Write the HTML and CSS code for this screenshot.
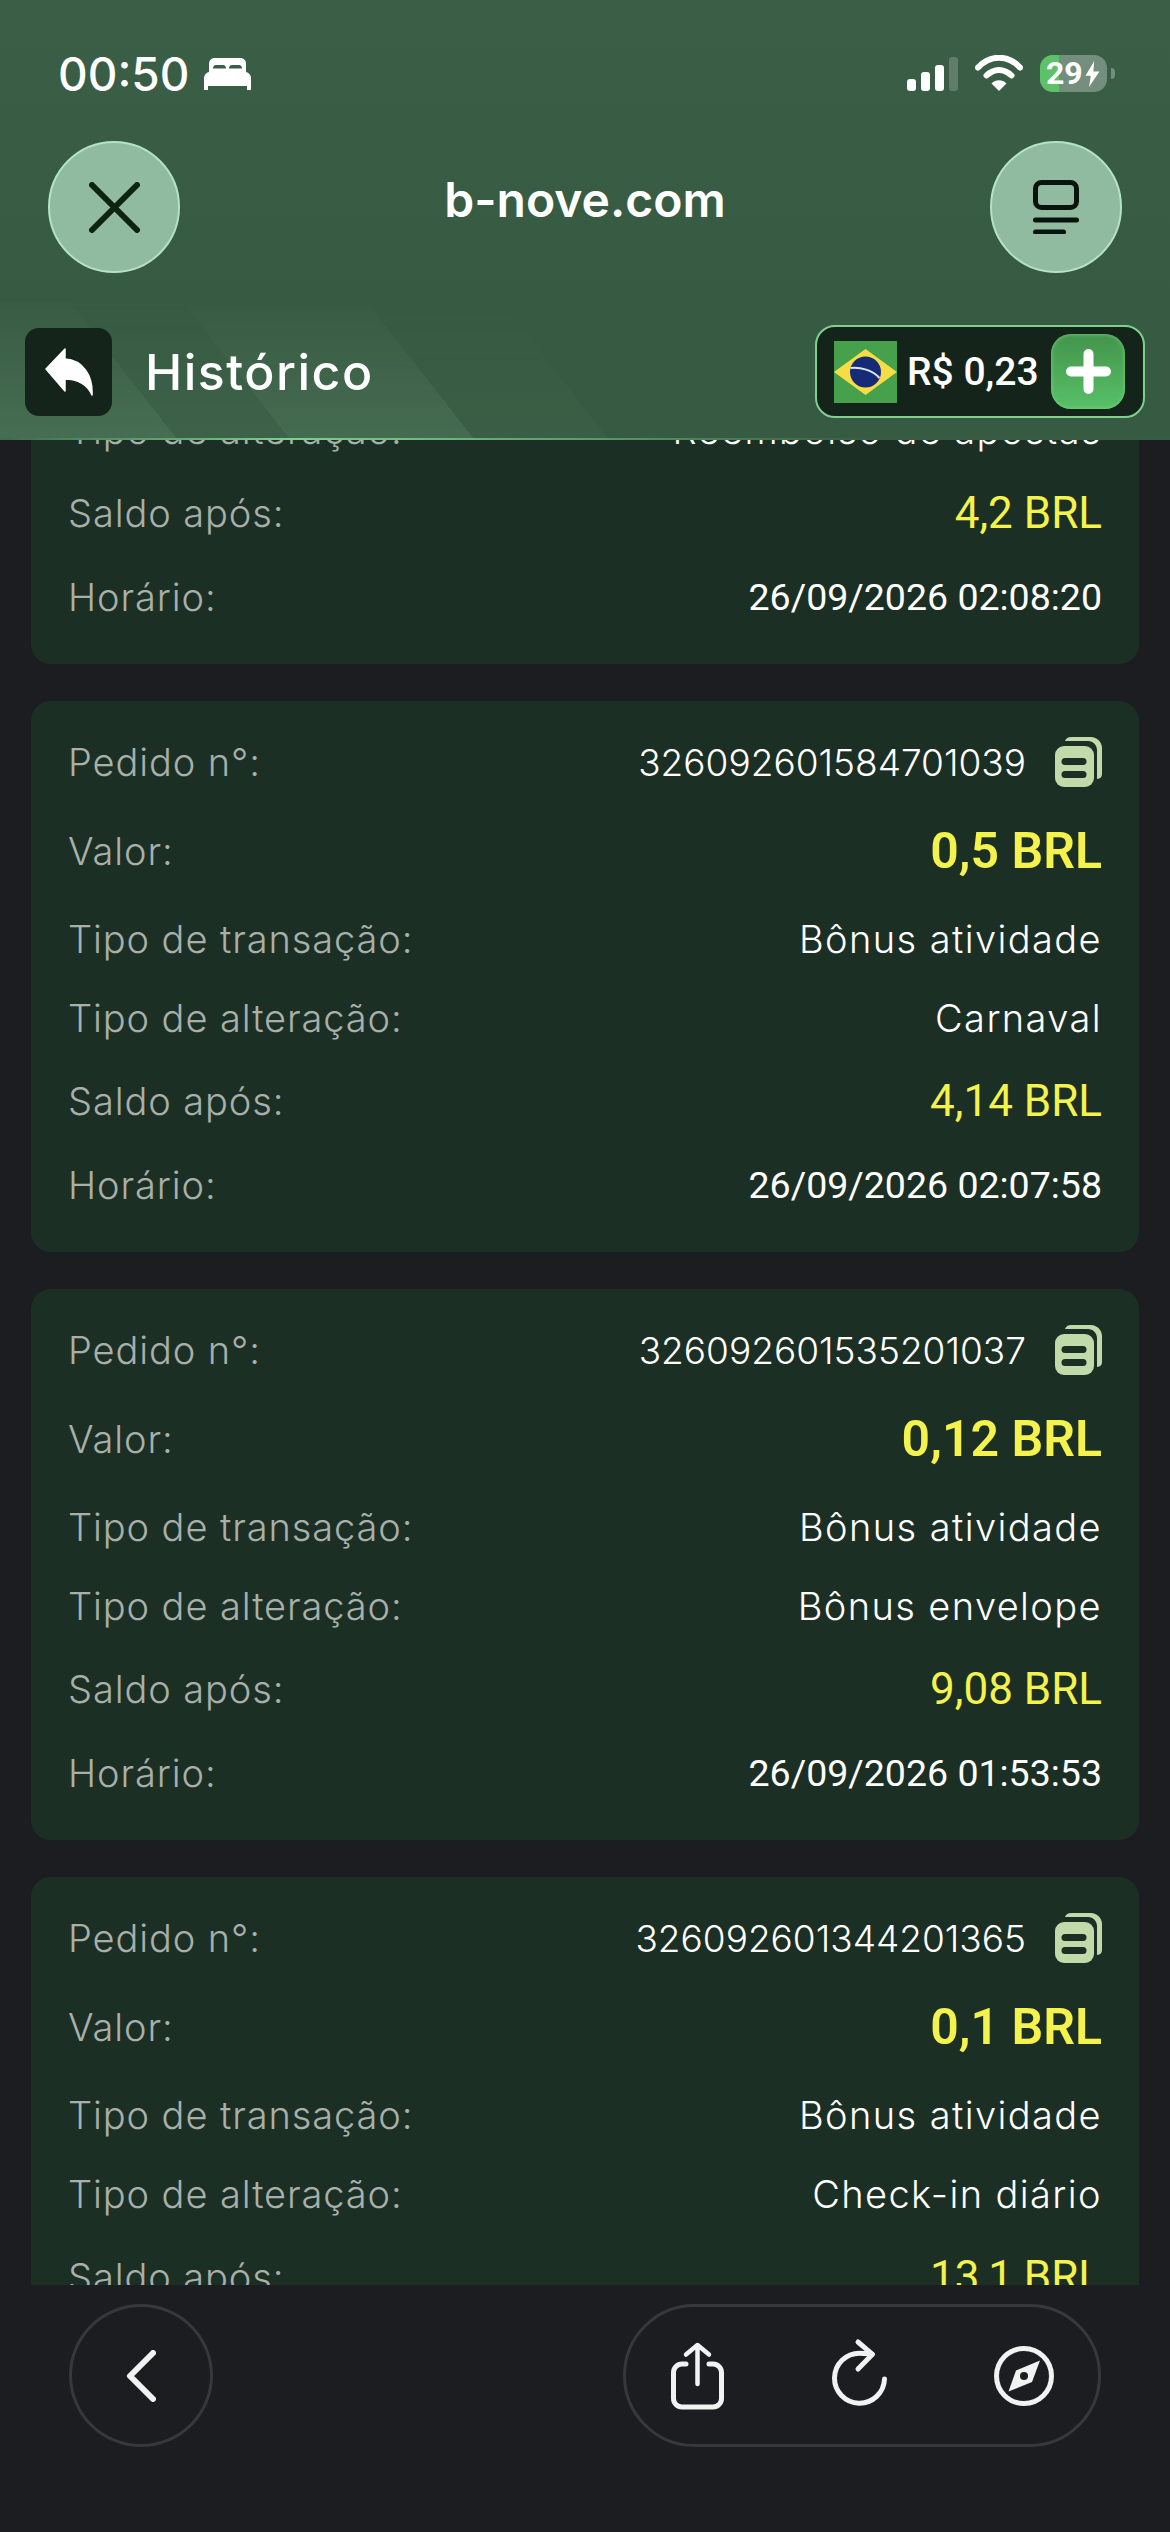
FILE: index.html
```html
<!DOCTYPE html>
<html lang="pt-BR">
<head>
    <meta charset="UTF-8">
    <meta name="viewport" content="width=device-width, initial-scale=1.0">
    <title>b-nove.com</title>
    <link rel="stylesheet" href="styles.css">
</head>
<body>
<div class="app">
    <header class="top">
        <div class="status">
            <div class="status-left">
                <span class="time">00:50</span>
                <svg class="bed" viewBox="0 0 47 32"><path fill="#fff" fill-rule="evenodd" d="M5 14V6c0-3.500 2-6 6-6h25c4 0 6 2.500 6 6v8c3 .8 5 3 5 6v12h-4v-4H4v4H0V20c0-3 2-5.200 5-6zM9 10.500c0-2 1-3.500 3-3.500h7c2 0 3 1.500 3 3.500zM25 10.500c0-2 1-3.500 3-3.500h7c2 0 3 1.500 3 3.500z"/></svg>
            </div>
            <div class="status-right">
                <div class="signal">
                    <i class="bar bar1"></i><i class="bar bar2"></i><i class="bar bar3"></i><i class="bar bar4"></i>
                </div>
                <svg class="wifi" viewBox="0 0 48 36"><path fill="none" stroke="#fff" stroke-width="6" stroke-linecap="round" d="M3 12.500C15-.5 33-.5 45 12.500M11.500 20.500C19 13 29 13 36.500 20.500"/><path fill="#fff" d="M24 36l-7.500-7.500c4-4.200 11-4.200 15 0z"/></svg>
                <div class="battery">
                    <span class="battery-fill"></span>
                    <span class="battery-num">29</span>
                    <svg class="bolt" viewBox="0 0 16 30"><path fill="#fff" d="M10 0L0 17h6L4 30l12-18H9z"/></svg>
                </div>
                <span class="battery-nub"></span>
            </div>
        </div>
        <div class="nav">
            <button class="round-btn">
                <svg width="51" height="51" viewBox="0 0 51 51"><path fill="none" stroke="#0c2410" stroke-width="6" stroke-linecap="round" d="M3 3l45 45M48 3L3 48"/></svg>
            </button>
            <div class="site">b-nove.com</div>
            <button class="round-btn">
                <svg width="46" height="54" viewBox="0 0 46 54"><g fill="none" stroke="#08140c" stroke-width="5" stroke-linecap="round"><rect x="2.500" y="2.500" width="41" height="25" rx="6"/><path d="M2.500 40h41M2.500 52h28"/></g></svg>
            </button>
        </div>
        <div class="subbar">
            <div class="sub-left">
                <button class="back-btn">
                    <svg width="48" height="48" viewBox="0 0 48 48"><path fill="#fff" stroke="#fff" stroke-width="1.500" stroke-linejoin="round" d="M20 1L1 21l19 22V31c12 0 22 5 27 16 1-19-9-35-27-36z"/></svg>
                </button>
                <h1 class="page-title">Histórico</h1>
            </div>
            <div class="wallet">
                <svg class="flag" viewBox="0 0 63 62"><rect width="63" height="62" fill="#47a04c"/><path fill="#f6dc45" d="M31.500 8L63 31 31.500 54 0 31z"/><circle cx="31.500" cy="31" r="15.500" fill="#172a78"/><path fill="none" stroke="#dfe6ea" stroke-width="2" d="M16.500 27c10-1 22 2 29 10"/></svg>
                <span class="wallet-amount">R$ 0,23</span>
                <button class="plus-btn">
                    <svg width="45" height="45" viewBox="0 0 45 45"><path fill="none" stroke="#fff" stroke-width="10" stroke-linecap="round" d="M22.500 5v35M5 22.500h35"/></svg>
                </button>
            </div>
        </div>
    </header>

    <main class="list">
        <div class="track">
            <section class="card card-cut">
                <div class="row row-type"><span class="label">Tipo de alteração:</span><span class="val">Reembolso de apostas</span></div>
                <div class="row row-balance"><span class="label">Saldo após:</span><span class="val balance">4,2 BRL</span></div>
                <div class="row row-time"><span class="label">Horário:</span><span class="val stamp">26/09/2026 02:08:20</span></div>
            </section>

            <section class="card">
                <div class="row"><span class="label">Pedido n°:</span><span class="val order">326092601584701039<svg class="copy" viewBox="0 0 47 50"><path fill="#c2d9aa" d="M10 4c1-2.500 3-4 6-4h20c6 0 11 5 11 11v26c0 3-1.500 4.500-5 5V13c0-5-4-9-9-9z"/><rect y="9" width="39" height="41" rx="9" fill="#c2d9aa"/><rect x="6.500" y="21" width="25" height="7" rx="3.500" fill="#1c2f25"/><rect x="6.500" y="34" width="25" height="7" rx="3.500" fill="#1c2f25"/></svg></span></div>
                <div class="row row-amount"><span class="label">Valor:</span><span class="val amount">0,5 BRL</span></div>
                <div class="row row-kind"><span class="label">Tipo de transação:</span><span class="val">Bônus atividade</span></div>
                <div class="row row-type"><span class="label">Tipo de alteração:</span><span class="val">Carnaval</span></div>
                <div class="row row-balance"><span class="label">Saldo após:</span><span class="val balance">4,14 BRL</span></div>
                <div class="row row-time"><span class="label">Horário:</span><span class="val stamp">26/09/2026 02:07:58</span></div>
            </section>

            <section class="card">
                <div class="row"><span class="label">Pedido n°:</span><span class="val order">326092601535201037<svg class="copy" viewBox="0 0 47 50"><path fill="#c2d9aa" d="M10 4c1-2.500 3-4 6-4h20c6 0 11 5 11 11v26c0 3-1.500 4.500-5 5V13c0-5-4-9-9-9z"/><rect y="9" width="39" height="41" rx="9" fill="#c2d9aa"/><rect x="6.500" y="21" width="25" height="7" rx="3.500" fill="#1c2f25"/><rect x="6.500" y="34" width="25" height="7" rx="3.500" fill="#1c2f25"/></svg></span></div>
                <div class="row row-amount"><span class="label">Valor:</span><span class="val amount">0,12 BRL</span></div>
                <div class="row row-kind"><span class="label">Tipo de transação:</span><span class="val">Bônus atividade</span></div>
                <div class="row row-type"><span class="label">Tipo de alteração:</span><span class="val">Bônus envelope</span></div>
                <div class="row row-balance"><span class="label">Saldo após:</span><span class="val balance">9,08 BRL</span></div>
                <div class="row row-time"><span class="label">Horário:</span><span class="val stamp">26/09/2026 01:53:53</span></div>
            </section>

            <section class="card">
                <div class="row"><span class="label">Pedido n°:</span><span class="val order">326092601344201365<svg class="copy" viewBox="0 0 47 50"><path fill="#c2d9aa" d="M10 4c1-2.500 3-4 6-4h20c6 0 11 5 11 11v26c0 3-1.500 4.500-5 5V13c0-5-4-9-9-9z"/><rect y="9" width="39" height="41" rx="9" fill="#c2d9aa"/><rect x="6.500" y="21" width="25" height="7" rx="3.500" fill="#1c2f25"/><rect x="6.500" y="34" width="25" height="7" rx="3.500" fill="#1c2f25"/></svg></span></div>
                <div class="row row-amount"><span class="label">Valor:</span><span class="val amount">0,1 BRL</span></div>
                <div class="row row-kind"><span class="label">Tipo de transação:</span><span class="val">Bônus atividade</span></div>
                <div class="row row-type"><span class="label">Tipo de alteração:</span><span class="val">Check-in diário</span></div>
                <div class="row row-balance"><span class="label">Saldo após:</span><span class="val balance">13,1 BRL</span></div>
            </section>
        </div>
    </main>

    <footer class="browser-bar">
        <button class="bar-back">
            <svg width="30" height="52" viewBox="0 0 30 52"><path fill="none" stroke="#f2f2f3" stroke-width="6" stroke-linecap="round" stroke-linejoin="round" d="M27 3L4 26l23 23"/></svg>
        </button>
        <div class="bar-pill">
            <svg class="share" viewBox="0 0 53 68"><g fill="none" stroke="#f2f2f3" stroke-linecap="round" stroke-linejoin="round"><path stroke-width="5" d="M15 22h-4a8.500 8.500 0 0 0-8.500 8.500v26A8.500 8.500 0 0 0 11 65h31a8.500 8.500 0 0 0 8.500-8.500v-26A8.500 8.500 0 0 0 42 22h-4"/><path stroke-width="4.500" d="M26.500 3v39M15 12.500L26.500 3 38 12.500"/></g></svg>
            <svg class="reload" viewBox="0 0 56 70"><g fill="none" stroke="#f2f2f3" stroke-width="5" stroke-linecap="round" stroke-linejoin="round"><path d="M53.500 41A25 25 0 1 1 28.700 15.200L41 16"/><path d="M27 4l14.500 12.300L27 31"/></g></svg>
            <svg class="compass" viewBox="0 0 60 62"><circle cx="30" cy="31" r="27.500" fill="none" stroke="#f2f2f3" stroke-width="5"/><path fill="#f2f2f3" d="M46 15.500L38 37 14.500 46.500l7.500-21z"/><circle cx="30" cy="31" r="4" fill="#1c1d21"/></svg>
        </div>
    </footer>
</div>
</body>
</html>
```

FILE: styles.css
```css
* {
    box-sizing: border-box;
}
html, body {
    margin: 0;
    padding: 0;
}
body {
    font-family: Inter, "Noto Sans", sans-serif;
    background-color: #1c1d21;
    color: #fff;
}
button {
    border: 0;
    padding: 0;
    background: none;
    display: flex;
    align-items: center;
    justify-content: center;
}
.app {
    width: 1170px;
    height: 2532px;
    display: flex;
    flex-direction: column;
    overflow: hidden;
}

/* top */
.top {
    flex: none;
    height: 440px;
    background-image: linear-gradient(180deg, #3a5e46, #375a42 70%);
    position: relative;
    z-index: 1;
}
.status {
    height: 141px;
    padding: 55px 55px 0 58px;
    display: flex;
    justify-content: space-between;
    align-items: flex-start;
}
.status-left {
    display: flex;
    align-items: center;
    gap: 15px;
    height: 38px;
}
.time {
    font-size: 46px;
    font-weight: 500;
    line-height: 38px;
}
.bed {
    width: 47px;
    height: 32px;
}
.status-right {
    display: flex;
    align-items: flex-start;
    height: 38px;
}
.signal {
    display: flex;
    align-items: flex-end;
    gap: 5px;
    height: 34px;
    margin-top: 2px;
}
.bar {
    width: 9px;
    background-color: #fff;
    border-radius: 3px;
}
.bar1 { height: 12px; }
.bar2 { height: 19px; }
.bar3 { height: 26px; }
.bar4 { height: 34px; background-color: rgba(255, 255, 255, 0.2); }
.wifi {
    width: 48px;
    height: 36px;
    margin-left: 17px;
}
.battery {
    position: relative;
    width: 67px;
    height: 37px;
    margin-left: 17px;
    border-radius: 13px;
    overflow: hidden;
    background-color: rgba(255, 255, 255, 0.3);
    display: flex;
    align-items: center;
    padding-left: 6px;
    gap: 2px;
}
.battery-fill {
    position: absolute;
    left: 0;
    top: 0;
    width: 19px;
    height: 100%;
    background-color: #5cc169;
}
.battery-num {
    position: relative;
    font-family: Roboto, sans-serif;
    font-weight: 700;
    font-size: 32px;
    line-height: 37px;
}
.bolt {
    position: relative;
    width: 15px;
    height: 26px;
}
.battery-nub {
    width: 4px;
    height: 11px;
    margin: 13px 0 0 4px;
    border-radius: 0 5px 5px 0;
    background-color: rgba(255, 255, 255, 0.3);
}
.nav {
    height: 132px;
    padding: 0 48px;
    display: flex;
    align-items: center;
    justify-content: space-between;
}
.round-btn {
    width: 132px;
    height: 132px;
    border-radius: 50%;
    border: 2px solid #b5e2c4;
    background-color: #90bba1;
}
.site {
    font-size: 48px;
    font-weight: 600;
    margin-top: -15px;
}
.subbar {
    height: 137px;
    margin-top: 30px;
    padding: 0 25px;
    display: flex;
    align-items: center;
    justify-content: space-between;
    position: relative;
}
/* diagonal light bands behind the sub header */
.subbar::before {
    content: "";
    position: absolute;
    left: 0;
    top: 0;
    width: 100%;
    height: 100%;
    background-image: linear-gradient(52deg,
        rgba(150, 210, 170, 0.17) 140px,
        rgba(150, 210, 170, 0.07) 140px, rgba(150, 210, 170, 0.07) 229px,
        rgba(150, 210, 170, 0.15) 229px, rgba(150, 210, 170, 0.15) 374px,
        rgba(150, 210, 170, 0.04) 374px, rgba(150, 210, 170, 0.04) 480px,
        rgba(150, 210, 170, 0) 480px);
    -webkit-mask-image: linear-gradient(180deg, rgba(0, 0, 0, 0.12), #000);
    mask-image: linear-gradient(180deg, rgba(0, 0, 0, 0.12), #000);
}
.subbar::after {
    content: "";
    position: absolute;
    left: 0;
    bottom: 0;
    width: 100%;
    height: 2px;
    background-image: linear-gradient(90deg, #3f6a4d, #7fd08f 25%, #5e9a6d 50%, #385b43 75%);
}
.sub-left {
    position: relative;
    display: flex;
    align-items: center;
    gap: 33px;
}
.back-btn {
    width: 87px;
    height: 88px;
    border-radius: 14px;
    background-color: #14241a;
}
.page-title {
    margin: 0;
    font-size: 50px;
    font-weight: 500;
    letter-spacing: 1.500px;
}
.wallet {
    position: relative;
    width: 330px;
    height: 93px;
    padding: 0 18px 0 17px;
    border: 2px solid #7fd08f;
    border-radius: 20px;
    background-color: #14241a;
    display: flex;
    align-items: center;
}
.flag {
    width: 63px;
    height: 62px;
    flex: none;
}
.wallet-amount {
    flex: 1;
    margin-left: 10px;
    font-family: Roboto, sans-serif;
    font-size: 39px;
    font-weight: 500;
}
.plus-btn {
    width: 74px;
    height: 75px;
    border-radius: 20px;
    background-image: linear-gradient(180deg, #43944b, #58c068);
    box-shadow: inset 0 0 4px #72d580;
}

/* records */
.list {
    flex: 1;
    min-height: 0;
    overflow: hidden;
}
.track {
    display: flex;
    flex-direction: column;
    gap: 37px;
    margin-top: -40px;
    padding: 0 31px;
}
.card {
    flex: none;
    height: 551px;
    padding: 31px 37px 0;
    border-radius: 20px;
    background-color: #1c2f25;
}
.card-cut {
    height: 264px;
    padding-top: 0;
}
.row {
    height: 60px;
    display: flex;
    align-items: center;
    justify-content: space-between;
}
.row-amount { margin-top: 29px; }
.row-kind { margin-top: 28px; }
.row-type { margin-top: 19px; }
.row-balance { margin-top: 23px; }
.row-time { margin-top: 24px; }
.card-cut .row-type { margin-top: 0; }
.label {
    font-size: 38px;
    font-weight: 300;
    letter-spacing: 0.900px;
    color: #a9b0ab;
}
.val {
    font-size: 38px;
    font-weight: 300;
    letter-spacing: 1.400px;
    color: #fff;
    white-space: nowrap;
}
.order {
    display: flex;
    align-items: center;
    gap: 29px;
    font-size: 37px;
    letter-spacing: 0;
}
.copy {
    width: 47px;
    height: 50px;
    flex: none;
}
.amount {
    font-family: Roboto, sans-serif;
    font-size: 50px;
    font-weight: 600;
    letter-spacing: 0;
    color: #f4f24c;
}
.balance {
    font-family: Roboto, sans-serif;
    font-size: 44px;
    font-weight: 400;
    letter-spacing: 0;
    color: #f4f24c;
}
.stamp {
    font-family: Roboto, sans-serif;
    font-size: 37.500px;
    font-weight: 400;
    letter-spacing: 0;
}

/* browser bar */
.browser-bar {
    flex: none;
    height: 247px;
    padding: 19px 69px 0;
    background-color: #1c1d21;
    display: flex;
    align-items: flex-start;
    justify-content: space-between;
}
.bar-back {
    width: 144px;
    height: 143px;
    border-radius: 50%;
    border: 3px solid #37383c;
}
.bar-pill {
    width: 478px;
    height: 143px;
    border-radius: 72px;
    border: 3px solid #37383c;
    padding: 0 44px 0 45px;
    display: flex;
    align-items: center;
    justify-content: space-between;
}
.share {
    width: 53px;
    height: 68px;
}
.reload {
    width: 56px;
    height: 70px;
    margin-top: -6px;
}
.compass {
    width: 60px;
    height: 62px;
}
```
